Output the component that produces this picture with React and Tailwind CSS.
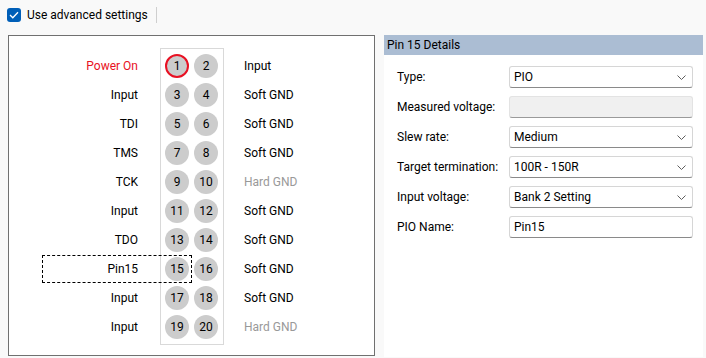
import React from "react"

const pins = [
  { left: "Power On", right: "Input", leftColor: "text-[#e81123]" },
  { left: "Input", right: "Soft GND" },
  { left: "TDI", right: "Soft GND" },
  { left: "TMS", right: "Soft GND" },
  { left: "TCK", right: "Hard GND", rightColor: "text-[#999999]" },
  { left: "Input", right: "Soft GND" },
  { left: "TDO", right: "Soft GND" },
  { left: "Pin15", right: "Soft GND" },
  { left: "Input", right: "Soft GND" },
  { left: "Input", right: "Hard GND", rightColor: "text-[#999999]" },
]

function Chevron() {
  return (
    <svg width="9" height="5" viewBox="0 0 9 5" className="shrink-0">
      <polyline points="0.5,0.5 4.5,4.5 8.5,0.5" fill="none" stroke="#5f5f5f" strokeWidth="1" />
    </svg>
  )
}

function Select({ value }) {
  return (
    <div className="flex items-center justify-between w-[184px] h-[22px] bg-white border border-[#d6d6d6] border-b-[#8a8a8a] rounded-[3px] pl-[4px] pr-[6px]">
      <span>{value}</span>
      <Chevron />
    </div>
  )
}

function TextBox({ value, disabled }) {
  return (
    <div
      className={
        disabled
          ? "w-[184px] h-[22px] bg-[#f0f0f0] border border-[#e3e3e3] border-b-[#9a9a9a] rounded-[3px]"
          : "w-[184px] h-[22px] bg-white border border-[#d6d6d6] border-b-[#8a8a8a] rounded-[3px] pl-[4px] flex items-center"
      }>
      {value}
    </div>
  )
}

function Pin({ n, active }) {
  return (
    <div
      className={
        active
          ? "w-[24px] h-[24px] rounded-full bg-[#cccccc] border-2 border-[#e81123] flex items-center justify-center"
          : "w-[24px] h-[24px] rounded-full bg-[#cccccc] flex items-center justify-center"
      }>
      {n}
    </div>
  )
}

export default function App() {
  return (
    <div
      className="w-[706px] h-[358px] bg-[#f9f9f9] text-[12px] text-black overflow-hidden"
      style={{ fontFamily: 'Roboto, "Noto Sans", sans-serif' }}>
      {/* top bar */}
      <div className="flex items-center h-[30px] pl-[7px]">
        <div className="w-[14px] h-[14px] rounded-[3px] bg-[#005fb8] flex items-center justify-center">
          <svg width="10" height="8" viewBox="0 0 10 8">
            <polyline points="1,4 3.8,6.8 9,1.2" fill="none" stroke="white" strokeWidth="1.3" />
          </svg>
        </div>
        <span className="ml-[6px]">Use advanced settings</span>
        <div className="ml-[8px] w-px h-[16px] bg-[#cfcfcf]" />
      </div>

      <div className="flex mt-[5px] pl-[8px]">
        {/* pin map */}
        <div className="relative w-[367px] h-[321px] bg-white border border-[#707070] pt-[12px]">
          <div className="flex items-start">
            <div className="w-[129px] pt-[6px] flex flex-col gap-[5px] items-end">
              {pins.map((p, i) => (
                <div key={i} className={"h-[24px] leading-[24px] " + (p.leftColor || "")}>
                  {p.left}
                </div>
              ))}
            </div>
            <div className="ml-[22px] w-[64px] border border-[#d9d9d9] pl-[4px] pr-[5px] py-[5px] flex flex-col gap-[5px]">
              {pins.map((p, i) => (
                <div key={i} className="flex gap-[5px]">
                  <Pin n={i * 2 + 1} active={i === 0} />
                  <Pin n={i * 2 + 2} />
                </div>
              ))}
            </div>
            <div className="ml-[20px] pt-[6px] flex flex-col gap-[5px]">
              {pins.map((p, i) => (
                <div key={i} className={"h-[24px] leading-[24px] " + (p.rightColor || "")}>
                  {p.right}
                </div>
              ))}
            </div>
          </div>
          {/* focus rectangle on selected pin */}
          <div className="absolute left-[33px] top-[219px] w-[150px] h-[28px] border border-dashed border-black" />
        </div>

        {/* details */}
        <div className="ml-[9px] w-[319px] h-[322px] bg-white">
          <div className="h-[20px] leading-[20px] bg-[#abbdd3] pl-[3px]">Pin 15 Details</div>
          <div className="pt-[11px] flex flex-col gap-[8px]">
            <div className="flex items-center h-[22px]">
              <div className="w-[125px] pl-[13px]">Type:</div>
              <Select value="PIO" />
            </div>
            <div className="flex items-center h-[22px]">
              <div className="w-[125px] pl-[13px]">Measured voltage:</div>
              <TextBox disabled />
            </div>
            <div className="flex items-center h-[22px]">
              <div className="w-[125px] pl-[13px]">Slew rate:</div>
              <Select value="Medium" />
            </div>
            <div className="flex items-center h-[22px]">
              <div className="w-[125px] pl-[13px]">Target termination:</div>
              <Select value="100R - 150R" />
            </div>
            <div className="flex items-center h-[22px]">
              <div className="w-[125px] pl-[13px]">Input voltage:</div>
              <Select value="Bank 2 Setting" />
            </div>
            <div className="flex items-center h-[22px]">
              <div className="w-[125px] pl-[13px]">PIO Name:</div>
              <TextBox value="Pin15" />
            </div>
          </div>
        </div>
      </div>
    </div>
  )
}
